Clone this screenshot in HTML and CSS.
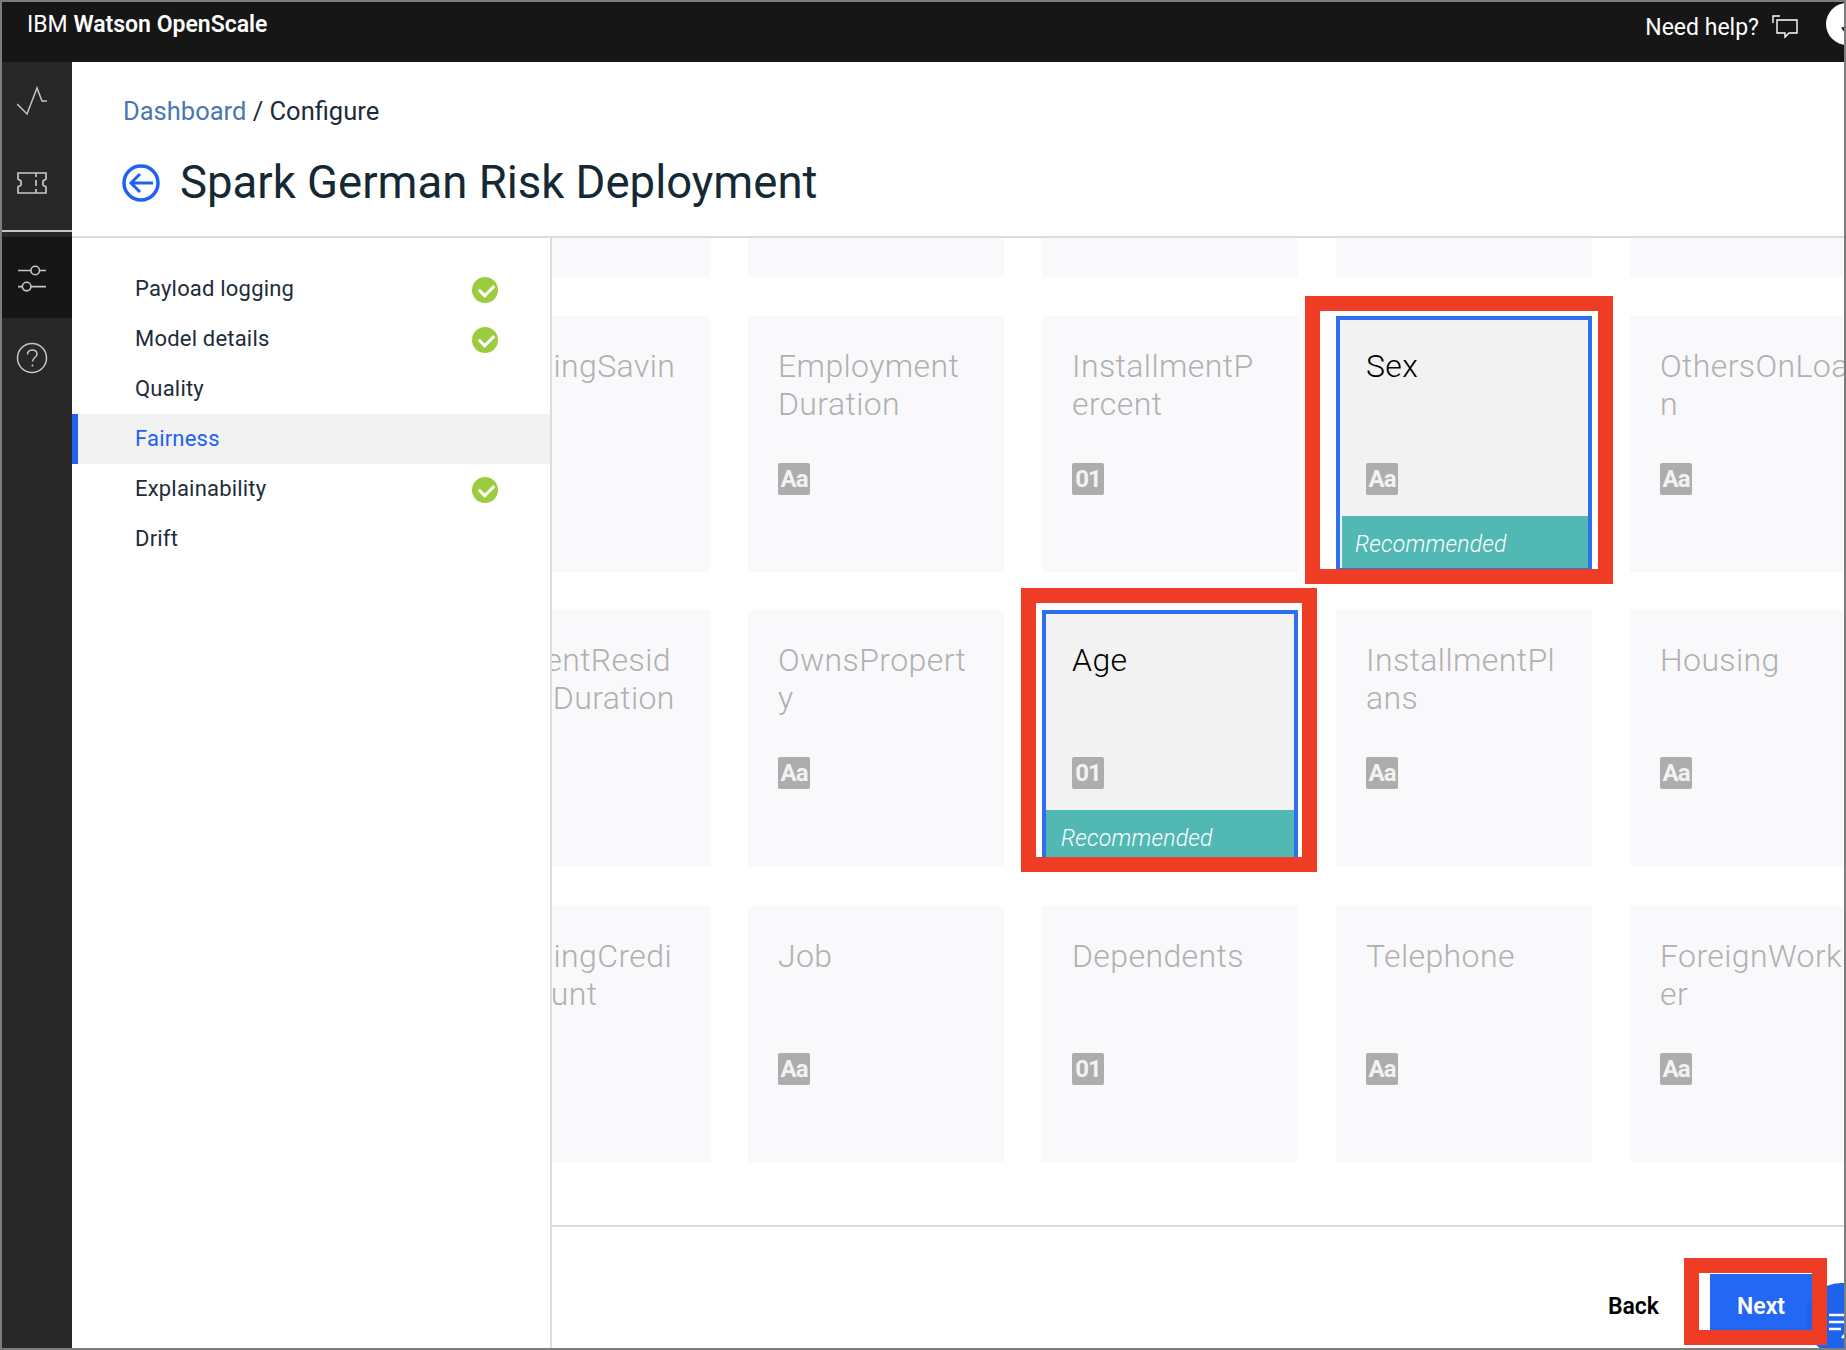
FILE: index.html
```html
<!DOCTYPE html>
<html lang="en">

<head>
    <meta charset="UTF-8" />
    <meta name="viewport" content="width=device-width, initial-scale=1.0" />
    <title>IBM Watson OpenScale</title>
    <link rel="stylesheet" href="styles.css">
</head>

<body>
    <div class="window">
        <header class="topbar">
            <div class="brand">IBM <b>Watson OpenScale</b></div>
            <div class="help">
                <span>Need help?</span>
                <svg class="help-icon" viewBox="0 0 26 24" fill="none" stroke="#fff" stroke-width="1.4">
                    <path d="M8 1H1v7" />
                    <path d="M5 5h20v13h-8l-4 4v-4H5z" />
                </svg>
            </div>
            <div class="avatar">J</div>
        </header>

        <div class="content">
            <nav class="rail">
                <div class="rail-item rail-item-first">
                    <svg viewBox="0 0 30 28" fill="none" stroke="#c6c6c6" stroke-width="1.5">
                        <path d="M0 17l10 10L20 1l5 13h5" />
                    </svg>
                </div>
                <div class="rail-item rail-item-last">
                    <svg viewBox="0 0 30 22" fill="none" stroke="#c6c6c6" stroke-width="1.7">
                        <path d="M1 1h28v6l-3 2v4l3 2v6H1v-6l3-2V9L1 7z" />
                        <path d="M19 1v4M19 8v6M19 17v4" />
                    </svg>
                </div>
                <div class="rail-item rail-item-active">
                    <svg viewBox="0 0 28 26" fill="none" stroke="#c6c6c6" stroke-width="1.5">
                        <path d="M1 6h12M21 6h6M1 21h4M13 21h14" />
                        <circle cx="17" cy="6" r="4" />
                        <circle cx="9" cy="21" r="4" />
                    </svg>
                </div>
                <div class="rail-item rail-item-help">
                    <svg viewBox="0 0 32 32" fill="none" stroke="#c6c6c6" stroke-width="1.5">
                        <circle cx="16" cy="16" r="14.5" />
                        <path d="M11.5 12.5c0-6 9.500-6 9.500-.500 0 3.500-4.500 3.500-4.500 7.500" />
                        <circle cx="16.500" cy="23.500" r="1" fill="#c6c6c6" stroke="none" />
                    </svg>
                </div>
            </nav>

            <main class="main">
                <div class="page-header">
                    <div class="breadcrumb"><a href="#">Dashboard</a> / Configure</div>
                    <div class="title-row">
                        <svg class="back-icon" viewBox="0 0 38 38" fill="none" stroke="#1f62f0" stroke-width="3.500">
                            <circle cx="19" cy="19" r="17" />
                            <path d="M31 19H9M18 10l-9 9 9 9" stroke-width="3" />
                        </svg>
                        <h1>Spark German Risk Deployment</h1>
                    </div>
                </div>

                <div class="body">
                    <aside class="steps">
                        <div class="step">Payload logging<span class="check"></span></div>
                        <div class="step">Model details<span class="check"></span></div>
                        <div class="step">Quality</div>
                        <div class="step step-active">Fairness</div>
                        <div class="step">Explainability<span class="check"></span></div>
                        <div class="step">Drift</div>
                    </aside>

                    <section class="panel">
                        <div class="grid-wrap">
                            <div class="grid">
                                <div class="card"></div>
                                <div class="card"></div>
                                <div class="card"></div>
                                <div class="card"></div>
                                <div class="card"></div>

                                <div class="card"><div class="card-title">ExistingSavin<br>gs</div><span class="badge">Aa</span></div>
                                <div class="card"><div class="card-title">Employment<br>Duration</div><span class="badge">Aa</span></div>
                                <div class="card"><div class="card-title">InstallmentP<br>ercent</div><span class="badge">01</span></div>
                                <div class="card card-selected">
                                    <div class="card-title">Sex</div><span class="badge">Aa</span>
                                    <div class="recommended recommended-gap">Recommended</div>
                                </div>
                                <div class="card"><div class="card-title">OthersOnLoa<br>n</div><span class="badge">Aa</span></div>

                                <div class="card"><div class="card-title">CurrentResid<br>enceDuration</div><span class="badge">01</span></div>
                                <div class="card"><div class="card-title">OwnsPropert<br>y</div><span class="badge">Aa</span></div>
                                <div class="card card-selected">
                                    <div class="card-title">Age</div><span class="badge">01</span>
                                    <div class="recommended">Recommended</div>
                                </div>
                                <div class="card"><div class="card-title">InstallmentPl<br>ans</div><span class="badge">Aa</span></div>
                                <div class="card"><div class="card-title">Housing</div><span class="badge">Aa</span></div>

                                <div class="card"><div class="card-title">ExistingCredi<br>tsCount</div><span class="badge">01</span></div>
                                <div class="card"><div class="card-title">Job</div><span class="badge">Aa</span></div>
                                <div class="card"><div class="card-title">Dependents</div><span class="badge">01</span></div>
                                <div class="card"><div class="card-title">Telephone</div><span class="badge">Aa</span></div>
                                <div class="card"><div class="card-title">ForeignWork<br>er</div><span class="badge">Aa</span></div>
                            </div>
                        </div>
                        <div class="footer">
                            <a class="back-link" href="#">Back</a>
                            <button class="next-btn">Next</button>
                        </div>
                    </section>
                </div>
            </main>
        </div>

        <!-- floating chat button, partly off the window -->
        <div class="chat-bubble">
            <svg viewBox="0 0 30 30" fill="none" stroke="#fff" stroke-width="2.500">
                <path d="M6 10h24M6 17h24M6 24h12M19 33l8-9" />
            </svg>
        </div>

        <!-- red annotation boxes drawn over the screenshot -->
        <div class="mark mark-sex"></div>
        <div class="mark mark-age"></div>
        <div class="mark mark-next"></div>
    </div>
</body>

</html>
```

FILE: styles.css
```css
* {
    box-sizing: border-box;
}

body {
    margin: 0;
    font-family: Roboto, "Liberation Sans", sans-serif;
    background-color: #fff;
}

.window {
    position: relative;
    width: 1846px;
    height: 1350px;
    border: 2px solid #7d7d7d;
    overflow: hidden;
    display: flex;
    flex-direction: column;
}

.topbar {
    flex: 0 0 60px;
    background-color: #161616;
    color: #fff;
    display: flex;
    align-items: flex-start;
    padding-left: 25px;
}

.brand {
    font-size: 23px;
    line-height: 22px;
    margin-top: 12px;
    flex: 1;
}

.brand b {
    font-weight: 600;
}

.help {
    display: flex;
    align-items: center;
    gap: 13px;
    font-size: 23px;
    margin-top: 12px;
    height: 26px;
}

.help-icon {
    width: 26px;
    height: 24px;
}

.avatar {
    width: 42px;
    height: 42px;
    margin: 1px -24px 0 28px;
    border-radius: 50%;
    background-color: #fff;
    color: #222;
    font-size: 24px;
    line-height: 42px;
    padding-left: 15px;
}

.content {
    flex: 1;
    display: flex;
    min-height: 0;
}

.rail {
    flex: 0 0 70px;
    background-color: #282828;
}

.rail-item {
    height: 80px;
    display: flex;
    align-items: center;
    justify-content: center;
    padding-right: 11px;
}

.rail-item svg {
    width: 30px;
    height: 30px;
}

.rail-item-first {
    padding-bottom: 2px;
}

.rail-item-last {
    height: 90px;
    border-bottom: 2px solid #c6c6c6;
    padding-bottom: 7px;
}

.rail-item-active {
    height: 81px;
    margin-top: 5px;
    background-color: #161616;
}

.rail-item-help svg {
    width: 32px;
    height: 32px;
}

.main {
    flex: 1;
    min-width: 0;
    display: flex;
    flex-direction: column;
}

.page-header {
    flex: 0 0 176px;
    padding: 34px 0 0 51px;
    border-bottom: 2px solid #dcdcdc;
}

.breadcrumb {
    font-size: 25.5px;
    line-height: 31px;
    color: #1d2c3a;
}

.breadcrumb a {
    color: #4a77b4;
    text-decoration: none;
}

.title-row {
    display: flex;
    align-items: center;
    gap: 20px;
    margin-top: 29px;
}

.back-icon {
    width: 38px;
    height: 38px;
    margin-left: -1px;
}

h1 {
    margin: 0;
    font-size: 45.5px;
    line-height: 54px;
    font-weight: 400;
    color: #152935;
}

.body {
    flex: 1;
    display: flex;
    min-height: 0;
}

.steps {
    flex: 0 0 480px;
    padding-top: 26px;
    border-right: 2px solid #dcdcdc;
}

.step {
    height: 50px;
    display: flex;
    align-items: center;
    justify-content: space-between;
    padding: 0 52px 2px 63px;
    font-size: 22px;
    letter-spacing: 0.2px;
    color: #1d2c3a;
}

.step-active {
    background-color: #f2f2f2;
    color: #1f62f0;
    box-shadow: inset 6px 0 0 #1f62f0;
}

.check {
    width: 26px;
    height: 26px;
    margin-top: 4px;
    border-radius: 50%;
    background-color: #9bcb3f;
    position: relative;
}

.check::after {
    content: "";
    position: absolute;
    left: 7px;
    top: 7px;
    width: 12px;
    height: 7px;
    border-left: 3px solid #fff;
    border-bottom: 3px solid #fff;
    transform: rotate(-45deg);
}

.panel {
    flex: 1;
    min-width: 0;
    display: flex;
    flex-direction: column;
}

.grid-wrap {
    flex: 1;
    overflow: hidden;
    min-height: 0;
}

/* the list is scrolled, so first row and first column are cut off */
.grid {
    display: grid;
    grid-template-columns: repeat(5, 256px);
    grid-template-rows: 256px 255px 257px 256px;
    align-items: start;
    column-gap: 38px;
    row-gap: 39px;
    margin: -217px 0 0 -98px;
}

.card {
    position: relative;
    height: 256px;
    background-color: #f9f9fb;
    padding: 31px 0 0 30px;
}

.card-title {
    height: 116px;
    font-size: 32px;
    line-height: 38px;
    letter-spacing: 0.4px;
    font-weight: 300;
    color: #b0b0b0;
    white-space: nowrap;
}

.badge {
    display: block;
    width: 32px;
    height: 32px;
    border-radius: 2px;
    background-color: #adadad;
    color: #f2f2f2;
    font-size: 24px;
    line-height: 32px;
    letter-spacing: -1px;
    font-weight: 700;
    text-align: center;
}

.card-selected {
    background-color: #f2f2f2;
    border: 4px solid #2d6ff0;
    padding: 27px 0 0 26px;
}

.card-selected .card-title {
    color: #000;
}

.recommended {
    position: absolute;
    left: 0;
    right: 0;
    top: 196px;
    bottom: 0;
    padding: 13px 0 0 15px;
    background-color: #52b8b4;
    color: #fff;
    font-size: 23px;
    letter-spacing: 0.2px;
    line-height: 32px;
    font-style: italic;
    font-weight: 300;
}

.recommended-gap {
    left: 2px;
    padding-left: 13px;
}

.footer {
    flex: 0 0 123px;
    border-top: 2px solid #dcdcdc;
    display: flex;
    justify-content: flex-end;
    align-items: flex-start;
    padding: 47px 32px 0 0;
}

.back-link {
    margin: 20px 51px 0 0;
    font-size: 23px;
    line-height: 26px;
    font-weight: 600;
    color: #000;
    text-decoration: none;
}

.next-btn {
    width: 102px;
    height: 60px;
    padding: 4px 0 0;
    border: none;
    background-color: #2368f5;
    color: #fff;
    font-family: inherit;
    font-size: 23px;
    font-weight: 600;
}

.chat-bubble {
    position: absolute;
    left: 1803px;
    top: 1281px;
    width: 72px;
    height: 72px;
    border-radius: 50%;
    background-color: #1f62ee;
    padding: 22px 0 0 18px;
}

.chat-bubble svg {
    width: 30px;
    height: 30px;
    overflow: visible;
}

.mark {
    position: absolute;
    border: 15px solid #ee3c25;
}

.mark-sex {
    left: 1303px;
    top: 294px;
    width: 308px;
    height: 288px;
}

.mark-age {
    left: 1019px;
    top: 586px;
    width: 296px;
    height: 284px;
}

.mark-next {
    left: 1682px;
    top: 1256px;
    width: 143px;
    height: 87px;
}
```
